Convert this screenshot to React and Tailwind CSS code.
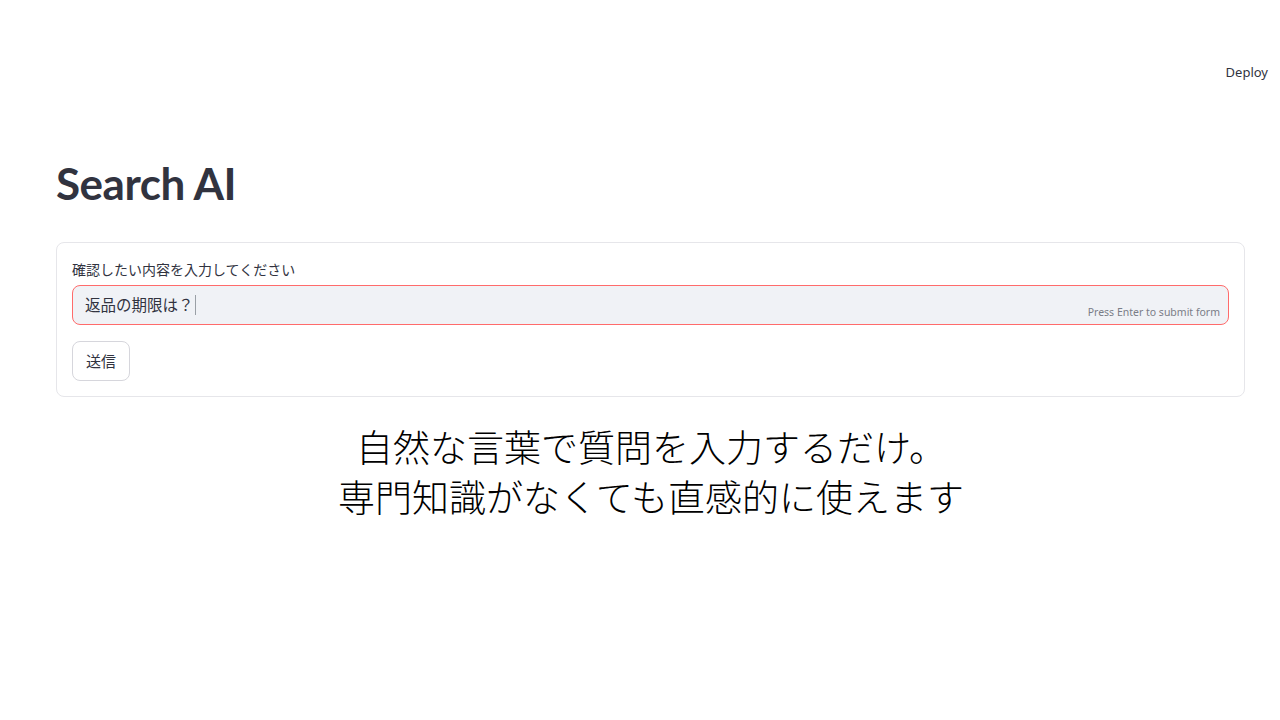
export default function App() {
  const jp = { fontFamily: '"Noto Sans CJK JP", "Noto Sans", sans-serif' };

  return (
    <div className="w-[1280px] h-[720px] bg-white text-[#31333f] overflow-hidden" style={jp}>
      {/* header */}
      <div className="h-[60px]" />
      <div className="flex justify-end pr-[12px]">
        <span className="text-[13px] leading-[24px] text-[#31333f]" style={{ fontFamily: '"Noto Sans", sans-serif' }}>
          Deploy
        </span>
      </div>

      <div className="px-[56px] pt-[75px]">
        <h1
          className="text-[44px] font-bold leading-[48px] text-[#31333f] tracking-[-0.5px]"
          style={{ fontFamily: 'Lato, "Noto Sans", sans-serif' }}
        >
          Search AI
        </h1>

        {/* form */}
        <div className="mt-[35px] w-[1189px] h-[155px] border border-[#e6e6ea] rounded-[8px] px-[15px] pt-[16px]">
          <div className="text-[14px] leading-[20px] text-[#31333f]">確認したい内容を入力してください</div>
          <div className="mt-[6px] h-[40px] bg-[#f0f2f6] border border-[#ff6b6b] rounded-[8px] flex items-center justify-between pl-[12px] pr-[8px]">
            <div className="flex items-center text-[15.5px] text-[#31333f]">
              返品の期限は？
              <span className="ml-[1px] w-[1px] h-[20px] bg-[#9aa0a6]" />
            </div>
            <span
              className="self-end mb-[3px] text-[10.5px] text-[#7a7d87]"
              style={{ fontFamily: '"Noto Sans", sans-serif' }}
            >
              Press Enter to submit form
            </span>
          </div>
          <button className="mt-[16px] w-[58px] h-[40px] bg-white border border-[#d6d6dc] rounded-[8px] text-[15px] text-[#31333f]">
            送信
          </button>
        </div>
      </div>

      {/* caption */}
      <div className="mt-[24px] pl-[22px] text-center text-[37px] leading-[50px] text-black font-light">
        <div>自然な言葉で質問を入力するだけ。</div>
        <div>専門知識がなくても直感的に使えます</div>
      </div>
    </div>
  );
}
